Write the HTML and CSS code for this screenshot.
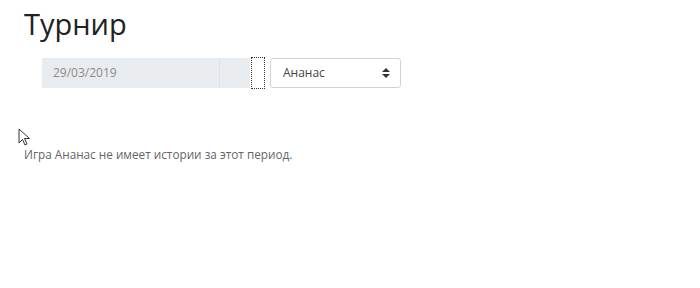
FILE: index.html
```html
<!DOCTYPE html>
<html lang="ru">
<head>
<meta charset="utf-8">
<link rel="stylesheet" href="styles.css">
</head>
<body>
<div class="page">
  <h1 class="title">Турнир</h1>
  <div class="controls">
    <div class="date-group">
      <div class="date-input">29/03/2019</div>
      <div class="date-addon"></div>
    </div>
    <div class="focus-box"></div>
    <div class="select">
      <span>Ананас</span>
      <svg class="caret" width="8" height="10" viewBox="0 0 8 10"><path d="M4 0 L8 4 H0 Z M0 6 H8 L4 10 Z" fill="#333"/></svg>
    </div>
  </div>
  <div class="cursor-row">
    <svg class="cursor" width="13" height="18" viewBox="0 0 13 18"><path d="M1 1 V15 L4.5 11.5 L7 17 L9 16 L6.5 10.5 H11.5 Z" fill="#fff" stroke="#333" stroke-width="1"/></svg>
  </div>
  <p class="message">Игра Ананас не имеет истории за этот период.</p>
</div>
</body>
</html>
```
FILE: styles.css
```css
html, body {
  margin: 0;
  padding: 0;
  background: #fff;
}
.page {
  font-family: "Open Sans", "Noto Sans", sans-serif;
  padding: 0 0 0 24px;
}
.title {
  margin: 0;
  padding-top: 4px;
  font-weight: 400;
  font-size: 29px;
  line-height: 40px;
  color: #222;
}
.controls {
  display: flex;
  align-items: center;
  margin-top: 13px;
  margin-left: 18px;
  height: 31px;
}
.date-group {
  display: flex;
  height: 30px;
}
.date-input {
  width: 166px;
  background: #e9ecef;
  color: #8a8a8a;
  font-size: 12px;
  line-height: 30px;
  padding-left: 11px;
}
.date-addon {
  width: 30px;
  background: #e9ecef;
  border-left: 1px solid #dde1e5;
}
.focus-box {
  width: 12px;
  height: 30px;
  margin-left: 1px;
  border: 1px dotted #333;
}
.select {
  box-sizing: border-box;
  width: 131px;
  height: 30px;
  margin-left: 5px;
  border: 1px solid #ced4da;
  border-radius: 3px;
  display: flex;
  align-items: center;
  justify-content: space-between;
  padding: 0 10px 0 12px;
  font-size: 12px;
  color: #444;
}
.caret {
  display: block;
}
.cursor-row {
  padding-top: 40px;
  margin-left: -6px;
}
.cursor {
  display: block;
}
.message {
  margin: 0;
  font-size: 11.75px;
  line-height: 16px;
  color: #666;
}
```
